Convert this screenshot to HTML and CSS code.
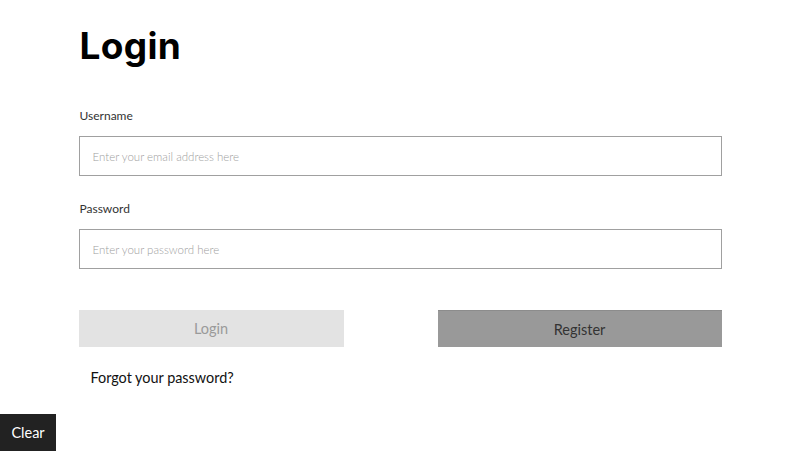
FILE: index.html
```html
<!DOCTYPE html>
<html>
<head>
<meta charset="utf-8">
<link rel="stylesheet" href="styles.css">
</head>
<body>
<main class="login">
  <h1 class="title">Login</h1>
  <div class="field">
    <label class="label">Username</label>
    <input class="input" type="text" placeholder="Enter your email address here">
  </div>
  <div class="field">
    <label class="label">Password</label>
    <input class="input" type="password" placeholder="Enter your password here">
  </div>
  <div class="actions">
    <button class="btn btn-login">Login</button>
    <button class="btn btn-register">Register</button>
  </div>
  <a class="forgot">Forgot your password?</a>
</main>
<button class="clear">Clear</button>
</body>
</html>
```
FILE: styles.css
```css
html, body {
  margin: 0;
  padding: 0;
  background: #fff;
}
body {
  font-family: Lato, "Liberation Sans", sans-serif;
  color: #111;
}
.login {
  width: 643px;
  margin: 0 auto;
  padding-top: 22px;
  display: flex;
  flex-direction: column;
}
.title {
  margin: 0 0 0 1px;
  font-family: Inter, "Noto Sans", sans-serif;
  font-weight: 700;
  font-size: 37px;
  line-height: 48px;
  color: #000;
  letter-spacing: 0.3px;
}
.field {
  display: flex;
  flex-direction: column;
}
.field:first-of-type {
  margin-top: 38px;
}
.field + .field {
  margin-top: 25px;
}
.label {
  font-size: 12px;
  line-height: 16px;
  color: #333;
  margin-left: 1px;
  margin-bottom: 12px;
}
.input {
  box-sizing: border-box;
  height: 40px;
  margin: 0;
  border: 1px solid #a0a0a0;
  padding: 0 13px;
  font-family: Lato, sans-serif;
  font-weight: 300;
  font-size: 11.5px;
  color: #333;
  outline: none;
}
.input::placeholder {
  color: #a0a0a0;
}
.actions {
  margin-top: 41px;
  display: flex;
  justify-content: space-between;
}
.btn {
  height: 37px;
  border: none;
  margin: 0;
  font-family: Lato, sans-serif;
  font-size: 14.5px;
}
.btn-login {
  width: 265px;
  background: #e3e3e3;
  color: #9a9a9a;
}
.btn-register {
  width: 284px;
  background: #999;
  color: #333;
  border-top: 1px solid #8c8c8c;
}
.forgot {
  margin-top: 22px;
  margin-left: 12px;
  font-size: 14.4px;
  line-height: 18px;
  color: #111;
}
.clear {
  display: block;
  margin-top: 27px;
  width: 56px;
  height: 37px;
  border: none;
  background: #222;
  color: #fff;
  font-family: Lato, sans-serif;
  font-size: 14.5px;
  padding: 0;
}
```
